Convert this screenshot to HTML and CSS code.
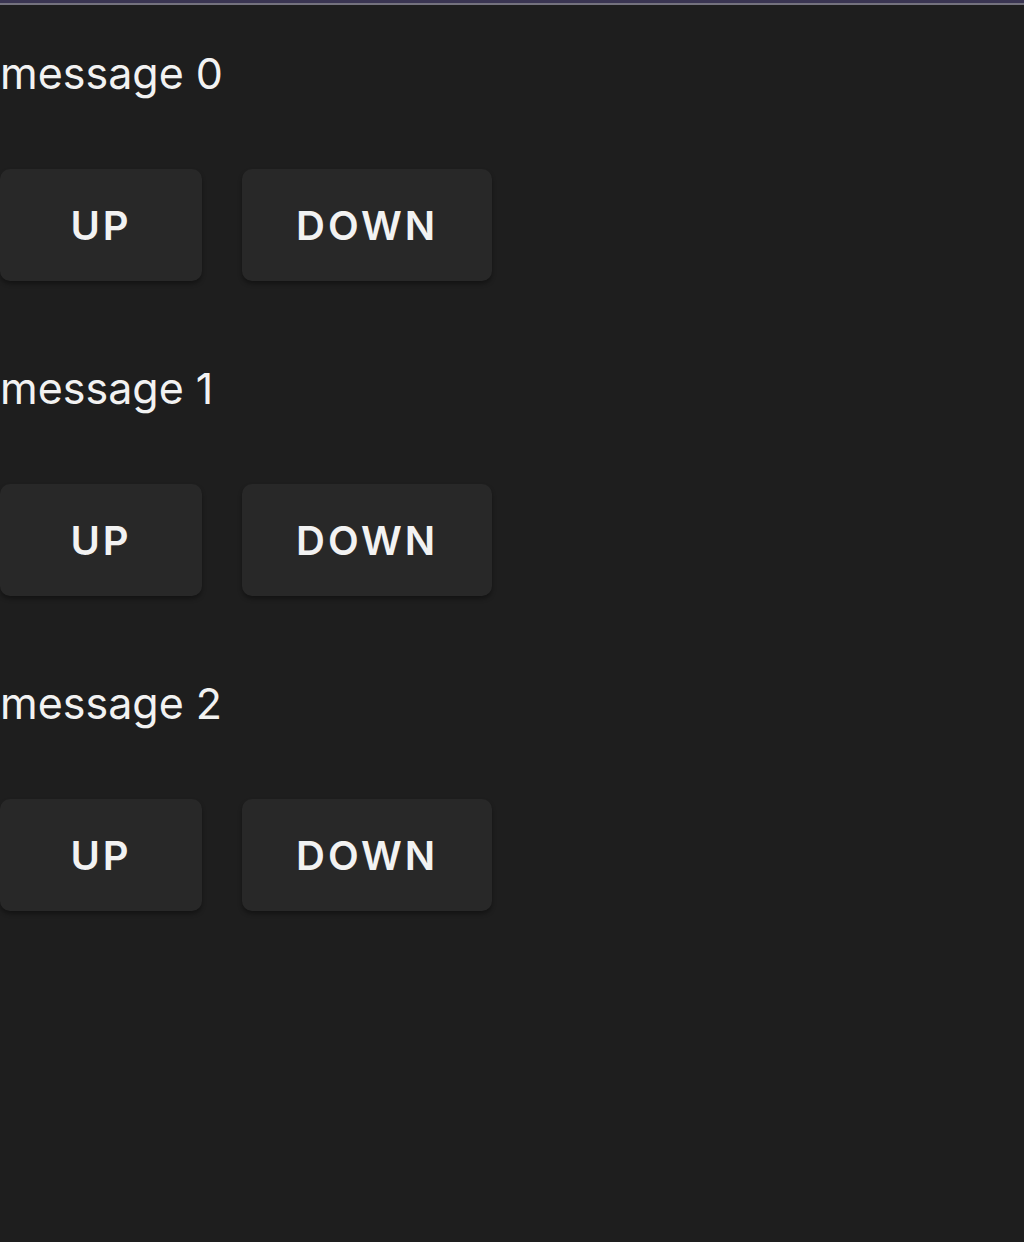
FILE: index.html
```html
<!DOCTYPE html>
<html lang="en">
<head>
  <meta charset="UTF-8">
  <title>Messages</title>
  <link rel="stylesheet" href="styles.css">
</head>
<body>
  <div class="topbar"></div>
  <main class="messages">
    <section class="message">
      <p class="message-text">message 0</p>
      <div class="actions">
        <button class="btn btn-up">Up</button>
        <button class="btn">Down</button>
      </div>
    </section>
    <section class="message">
      <p class="message-text">message 1</p>
      <div class="actions">
        <button class="btn btn-up">Up</button>
        <button class="btn">Down</button>
      </div>
    </section>
    <section class="message">
      <p class="message-text">message 2</p>
      <div class="actions">
        <button class="btn btn-up">Up</button>
        <button class="btn">Down</button>
      </div>
    </section>
  </main>
</body>
</html>
```

FILE: styles.css
```css
/* Base */
body {
  margin: 0;
  font-family: Inter, "Noto Sans", sans-serif;
  background-color: #1e1e1e;
  color: #f2f2f2;
  height: 1242px;
  overflow: hidden;
}
.topbar {
  height: 3px;
  background-color: #3a3552;
  border-bottom: 2px solid #74727e;
}
/* Message list */
.messages {
  padding-top: 38px;
}
.message {
  margin-bottom: 77px;
}
.message-text {
  margin: 0 0 66px;
  font-size: 43px;
  line-height: 60px;
}
.actions {
  display: flex;
  gap: 40px;
}
.btn {
  height: 112px;
  min-width: 202px;
  padding: 0 54px;
  border: none;
  border-radius: 10px;
  background-color: #282828;
  color: #f2f2f2;
  font-family: Inter, "Noto Sans", sans-serif;
  font-size: 40px;
  font-weight: 600;
  letter-spacing: 3px;
  text-transform: uppercase;
  box-shadow: 0 3px 4px rgba(0,0,0,0.35);
  cursor: pointer;
}
```
